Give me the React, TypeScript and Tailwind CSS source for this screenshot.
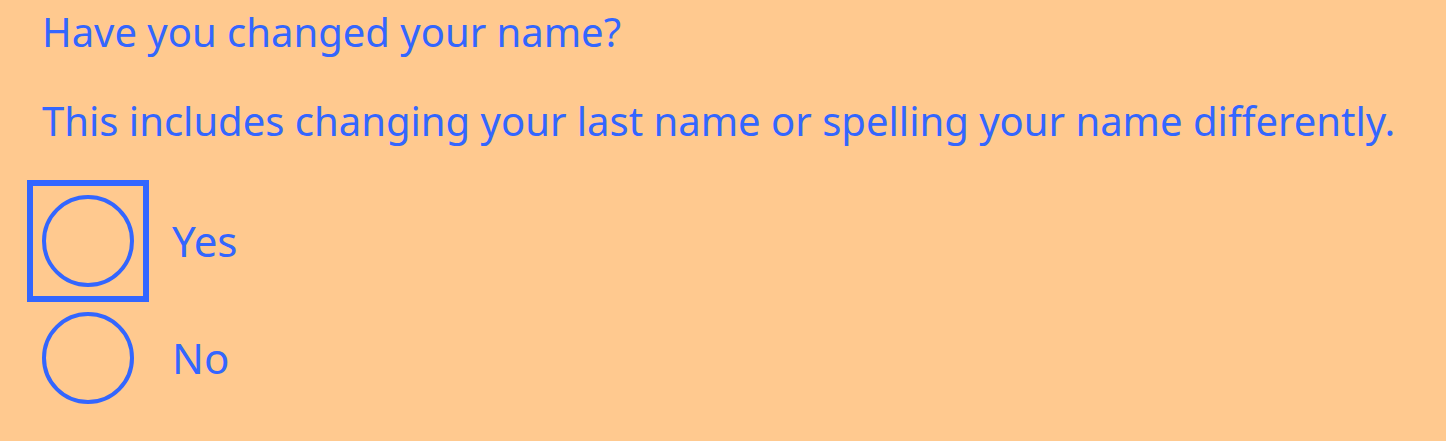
const font = "font-['Noto_Sans',sans-serif]";

function Radio({ label, focused = false }: { label: string; focused?: boolean }) {
  return (
    <label className="flex items-center gap-[38px]">
      <span
        className={`block shrink-0 ${
          focused ? "outline-[6px] outline-solid outline-offset-[9px] outline-[#3366ff]" : ""
        }`}
      >
        <span className="block h-[92px] w-[92px] rounded-full border-[4px] border-[#3366ff]" />
      </span>
      <span className="text-[42px] leading-[48px]">{label}</span>
    </label>
  );
}

export default function App() {
  return (
    <div className={`min-h-screen bg-[#ffc98f] pl-[42px] pt-[8px] text-[#3366ff] ${font}`}>
      <h1 className="text-[40px] leading-[48px] font-normal">Have you changed your name?</h1>
      <p className="mt-[41px] text-[40px] leading-[48px]">
        This includes changing your last name or spelling your name differently.
      </p>
      <div className="mt-[50px] flex flex-col gap-[25px]">
        <Radio label="Yes" focused />
        <Radio label="No" />
      </div>
    </div>
  );
}
